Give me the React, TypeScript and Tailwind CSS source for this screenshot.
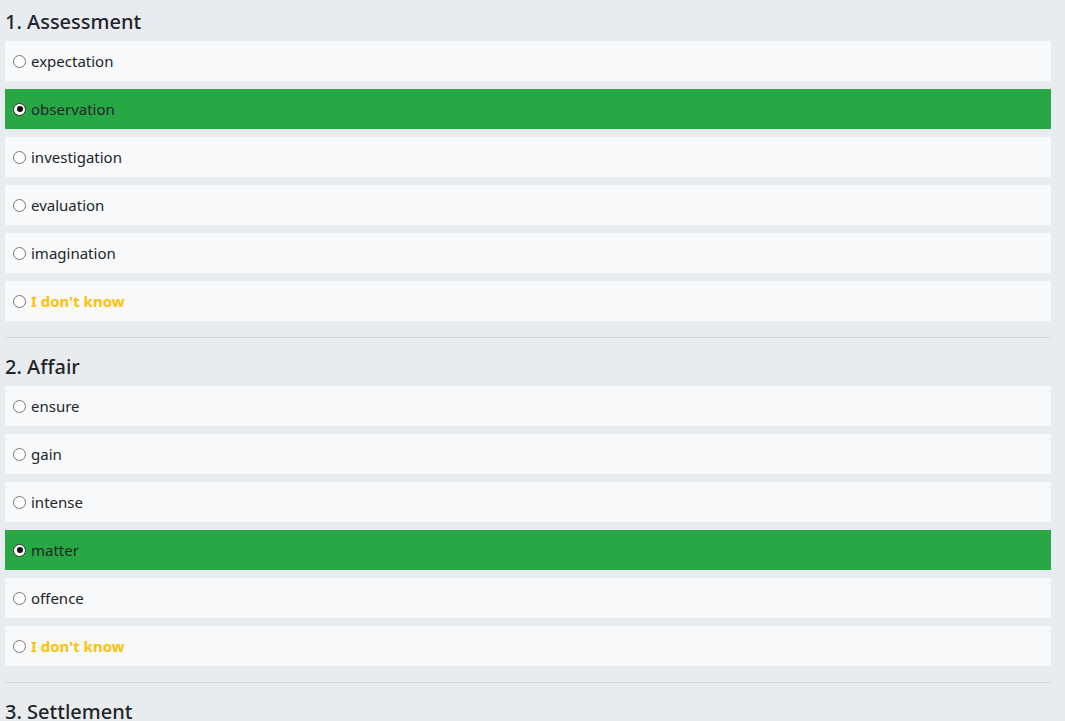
const SECTIONS = [
  {
    title: "1. Assessment",
    options: ["expectation", "observation", "investigation", "evaluation", "imagination"],
    picked: 1,
  },
  {
    title: "2. Affair",
    options: ["ensure", "gain", "intense", "matter", "offence"],
    picked: 3,
  },
  {
    title: "3. Settlement",
    options: ["agreement", "payment", "arrangement", "decision", "resolution"],
    picked: -1,
  },
];

function Radio({ on }: { on: boolean }) {
  return (
    <span
      className={`mr-[5px] flex h-[13px] w-[13px] shrink-0 items-center justify-center rounded-full bg-white ${
        on ? "border border-[#333]" : "border border-[#767676]"
      }`}
    >
      {on && <span className="h-[6px] w-[6px] rounded-full bg-[#111]" />}
    </span>
  );
}

function Option({ label, on, unknown }: { label: string; on?: boolean; unknown?: boolean }) {
  return (
    <label
      className={`flex h-10 items-center pl-2 ${on ? "bg-[#28a745]" : "bg-[#f8f9fa]"}`}
    >
      <Radio on={!!on} />
      <span className={unknown ? "font-bold text-[#ffc107]" : "text-[#212529]"}>
        {label}
      </span>
    </label>
  );
}

export default function App() {
  return (
    <div
      className="h-[721px] overflow-hidden bg-[#e9ecef] pl-[5px] pr-[14px] pt-[10px] text-[15px]"
      style={{ fontFamily: '"Segoe UI", "Noto Sans", sans-serif' }}
    >
      {SECTIONS.map((s, si) => (
        <div key={s.title}>
          {si > 0 && <hr className="mb-[17px] mt-4 border-t border-[#d3d6d9]" />}
          <h4 className="mb-[7px] h-6 text-[20px] font-medium leading-6 text-[#212529]">
            {s.title}
          </h4>
          <div className="flex flex-col gap-2">
            {s.options.map((o, i) => (
              <Option key={o} label={o} on={i === s.picked} />
            ))}
            <Option label="I don't know" unknown />
          </div>
        </div>
      ))}
    </div>
  );
}
